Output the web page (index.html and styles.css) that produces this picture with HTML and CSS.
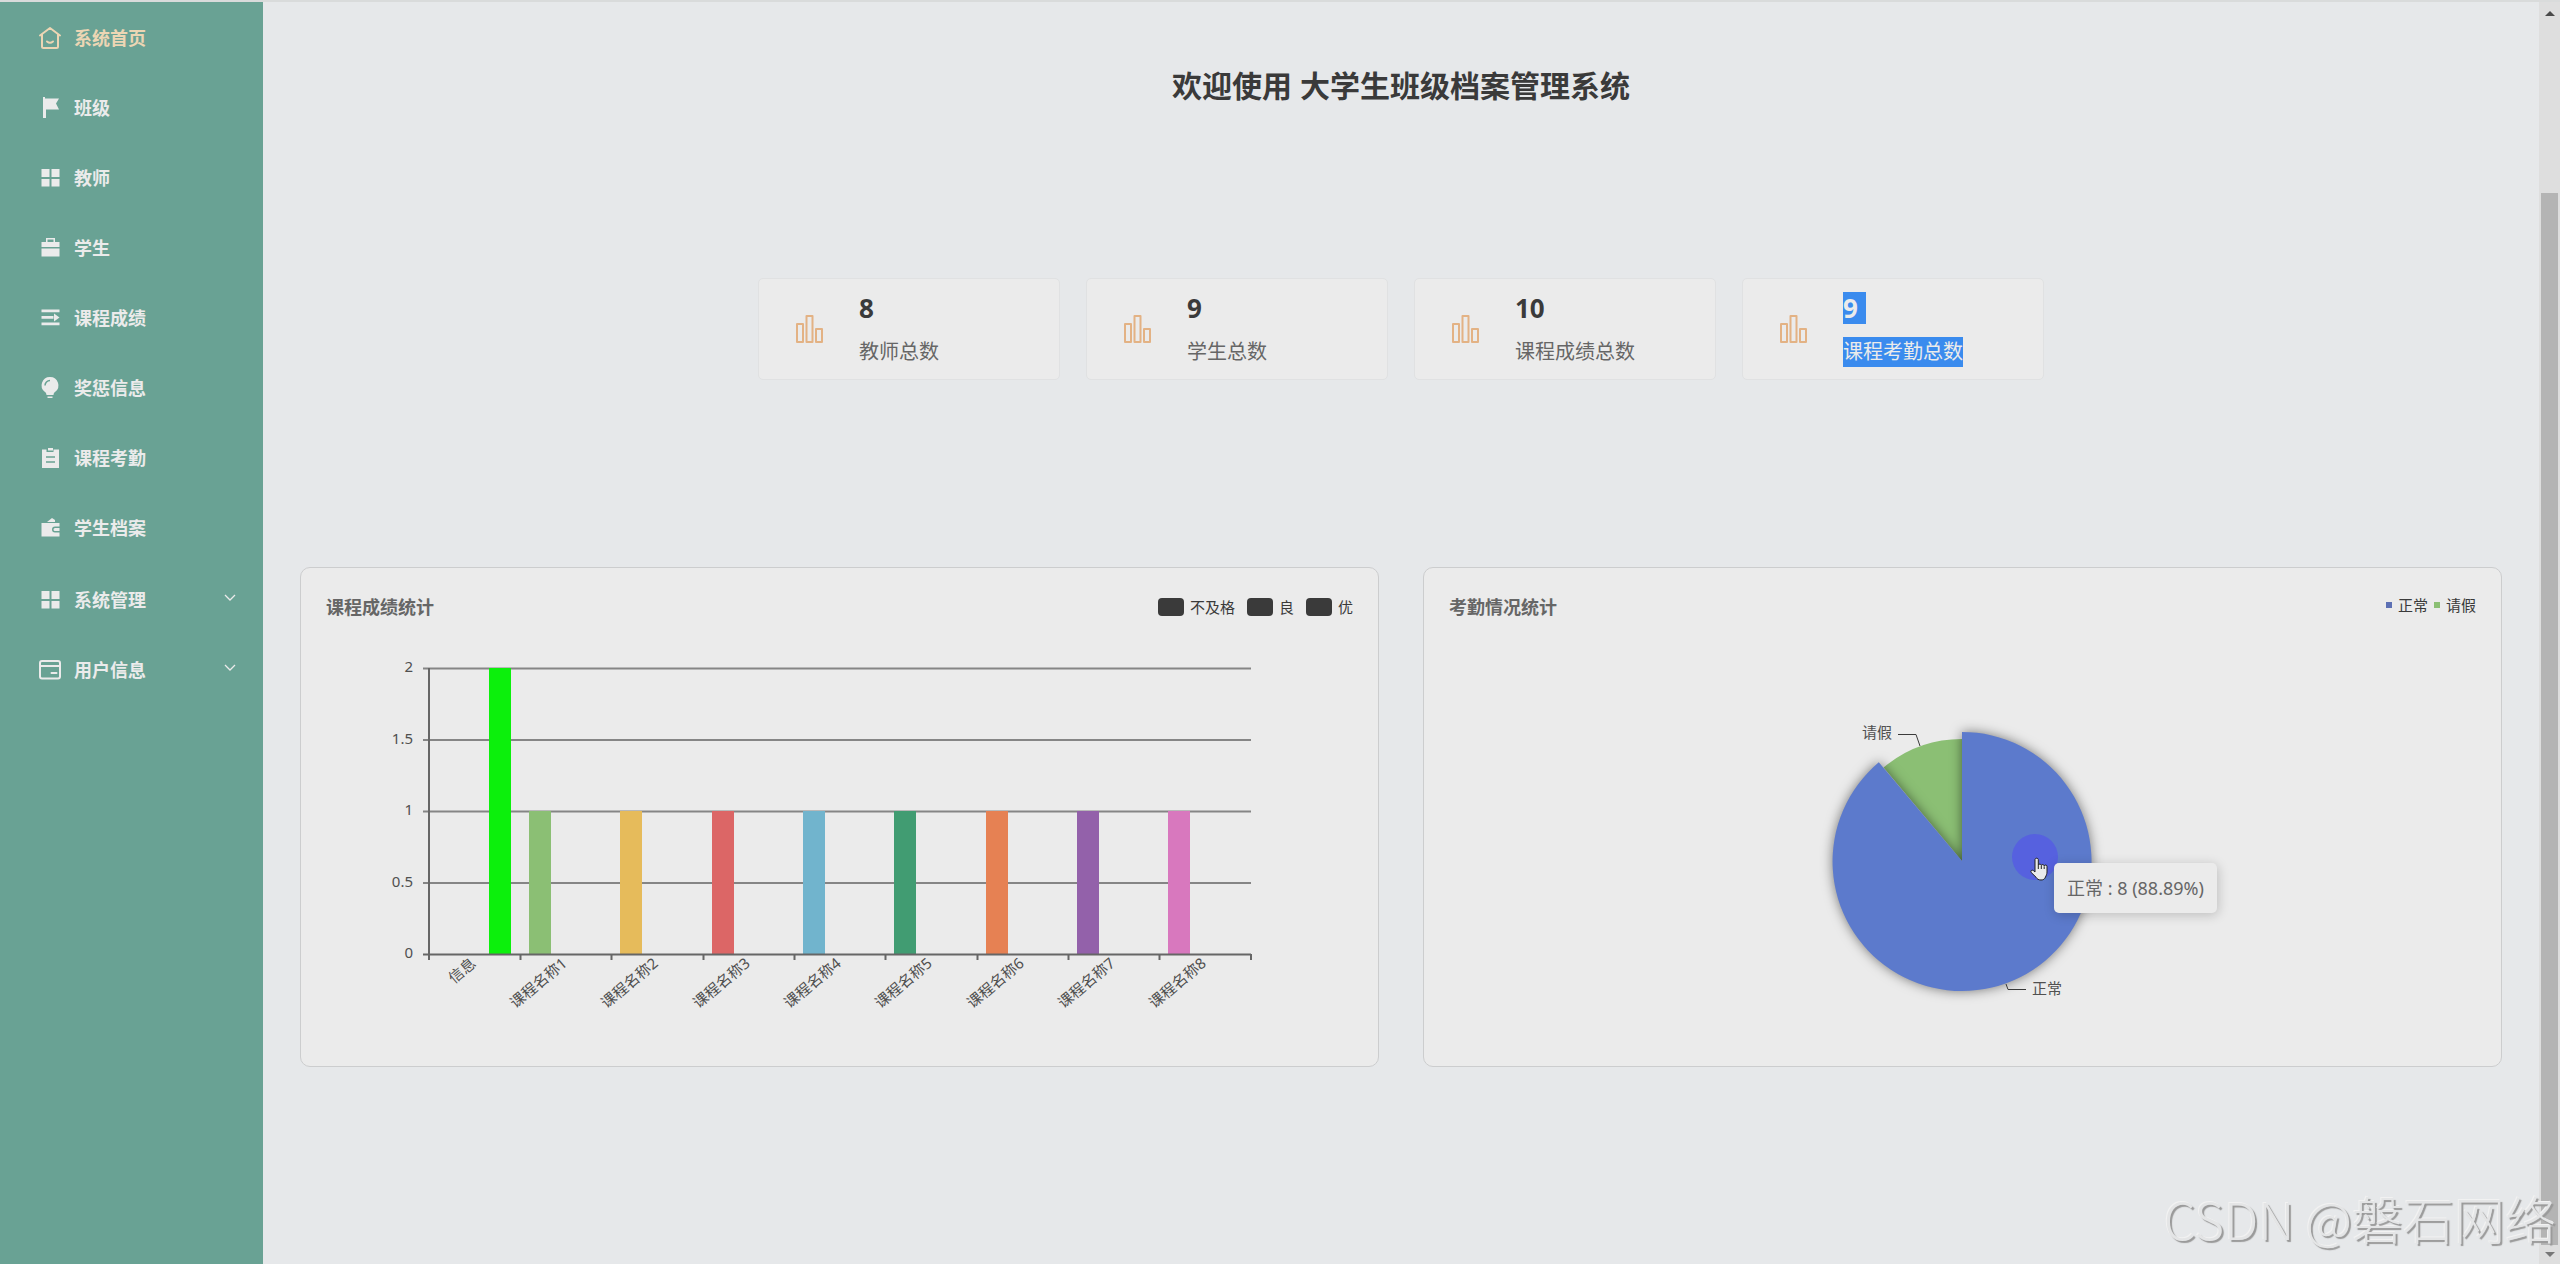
FILE: index.html
```html
<!DOCTYPE html>
<html lang="zh-CN">
<head>
  <meta charset="UTF-8" />
  <meta name="viewport" content="width=device-width, initial-scale=1.0" />
  <title>大学生班级档案管理系统</title>
  <link rel="stylesheet" href="styles.css">
</head>
<body>

  <nav class="sidebar">
    <ul class="menu">
      <li><a class="menu-item active" href="#">
        <svg class="icon" viewBox="0 0 24 24"><path class="line" d="M2 9.5L12 2l10 7.5M4 8.500V20.500a1.500 1.500 0 0 0 1.500 1.500h13a1.500 1.500 0 0 0 1.500-1.500V8.500M9 15.500q3 2.500 6 0"/></svg>
        <span>系统首页</span></a></li>
      <li><a class="menu-item" href="#">
        <svg class="icon" viewBox="0 0 24 24"><path d="M5 1h2v1.500h14l-3 5 3 6H8V22H5z"/></svg>
        <span>班级</span></a></li>
      <li><a class="menu-item" href="#">
        <svg class="icon" viewBox="0 0 24 24"><path d="M3.500 3h8v8h-8zM13.500 3h8v8h-8zM3.500 13h8v7.500h-8zM13.500 13h8v7.500h-8z"/></svg>
        <span>教师</span></a></li>
      <li><a class="menu-item" href="#">
        <svg class="icon" viewBox="0 0 24 24"><path d="M8 2h9v4h4.500v5h-18V6H8zM9.500 3.500V6h6V3.500zM3.500 12.500h18V20.500h-18z" fill-rule="evenodd"/></svg>
        <span>学生</span></a></li>
      <li><a class="menu-item" href="#">
        <svg class="icon" viewBox="0 0 24 24"><path d="M3.500 3.500h18v2.800h-18zM3.500 10h12v2.800h-12zM3.500 16.500h18v2.800h-18zM16 7.500l5.500 4-5.500 4z"/></svg>
        <span>课程成绩</span></a></li>
      <li><a class="menu-item" href="#">
        <svg class="icon" viewBox="0 0 24 24"><path d="M12 1a8.300 8.300 0 0 1 5 15c-1 .8-1.300 1.500-1.500 3h-7c-.2-1.500-.5-2.200-1.500-3A8.300 8.300 0 0 1 12 1zM9.500 20.500h5V22h-5z"/><path class="cut" d="M7 9.500a5 5 0 0 1 5-5"/></svg>
        <span>奖惩信息</span></a></li>
      <li><a class="menu-item" href="#">
        <svg class="icon" viewBox="0 0 24 24"><path d="M4 3.500h4.500V6h7V3.500H21V22H4zM10 2h5v2.500h-5z"/><path class="cut" d="M8 11h9M8 16h9"/></svg>
        <span>课程考勤</span></a></li>
      <li><a class="menu-item" href="#">
        <svg class="icon" viewBox="0 0 24 24"><path d="M9 6l5-4 3 2v2zM3.500 7h18v3.500H17a2.800 2.800 0 0 0 0 6h4.500V20.500h-18zM17 12h4.500v3H17a1.500 1.500 0 0 1 0-3z"/></svg>
        <span>学生档案</span></a></li>
    </ul>
    <ul class="menu menu-groups">
      <li><a class="menu-item" href="#">
        <svg class="icon" viewBox="0 0 24 24"><path d="M3.500 3h8v8h-8zM13.500 3h8v8h-8zM3.500 13h8v7.500h-8zM13.500 13h8v7.500h-8z"/></svg>
        <span>系统管理</span>
        <svg class="arrow" viewBox="0 0 12 12"><path d="M1 1l5 5 5-5"/></svg></a></li>
      <li><a class="menu-item" href="#">
        <svg class="icon" viewBox="0 0 24 24"><path class="line" d="M4 3h16a2 2 0 0 1 2 2v13.500a2 2 0 0 1-2 2H4a2 2 0 0 1-2-2V5a2 2 0 0 1 2-2zM2 8h20M13.500 15h5"/></svg>
        <span>用户信息</span>
        <svg class="arrow" viewBox="0 0 12 12"><path d="M1 1l5 5 5-5"/></svg></a></li>
    </ul>
  </nav>

  <main class="content">
    <h1>欢迎使用 大学生班级档案管理系统</h1>

    <div class="stats">
      <div class="stat">
        <svg class="stat-icon" viewBox="0 0 28 28"><path d="M1 9h6v18H1zM10.500 1h6v26h-6zM20 14h6v13h-6z"/></svg>
        <div class="stat-text"><p class="num">8</p><p class="label">教师总数</p></div>
      </div>
      <div class="stat">
        <svg class="stat-icon" viewBox="0 0 28 28"><path d="M1 9h6v18H1zM10.500 1h6v26h-6zM20 14h6v13h-6z"/></svg>
        <div class="stat-text"><p class="num">9</p><p class="label">学生总数</p></div>
      </div>
      <div class="stat">
        <svg class="stat-icon" viewBox="0 0 28 28"><path d="M1 9h6v18H1zM10.500 1h6v26h-6zM20 14h6v13h-6z"/></svg>
        <div class="stat-text"><p class="num">10</p><p class="label">课程成绩总数</p></div>
      </div>
      <div class="stat selected">
        <svg class="stat-icon" viewBox="0 0 28 28"><path d="M1 9h6v18H1zM10.500 1h6v26h-6zM20 14h6v13h-6z"/></svg>
        <div class="stat-text"><p class="num">9</p><p class="label">课程考勤总数</p></div>
      </div>
    </div>

    <div class="panels">
      <section class="panel">
        <header class="panel-head">
          <h2>课程成绩统计</h2>
          <ul class="legend">
            <li><i class="swatch"></i>不及格</li>
            <li><i class="swatch"></i>良</li>
            <li><i class="swatch"></i>优</li>
          </ul>
        </header>
        <div class="chart">
          <svg viewBox="0 0 1077 420">
            <path class="grid" d="M122 22.500H950M122 94H950M122 165.500H950M122 237H950"/>
            <!-- 柱子 -->
            <g>
              <rect x="188" y="22" width="22" height="286" fill="#0cf00c"/>
              <rect x="228" y="165" width="22" height="143" fill="#8bbf74"/>
              <rect x="319" y="165" width="22" height="143" fill="#e6bb5b"/>
              <rect x="411" y="165" width="22" height="143" fill="#dc6666"/>
              <rect x="502" y="165" width="22" height="143" fill="#71b4cd"/>
              <rect x="593" y="165" width="22" height="143" fill="#419c72"/>
              <rect x="685" y="165" width="22" height="143" fill="#e68153"/>
              <rect x="776" y="165" width="22" height="143" fill="#9361aa"/>
              <rect x="867" y="165" width="22" height="143" fill="#d878be"/>
            </g>
            <path class="axis" d="M128 22V314M122 308.500H950M219.500 308v6M310.500 308v6M402.500 308v6M493.500 308v6M584.500 308v6M676.500 308v6M767.500 308v6M858.500 308v6M950 308v6"/>
            <g class="y-labels">
              <text x="112" y="26">2</text>
              <text x="112" y="98">1.5</text>
              <text x="112" y="169">1</text>
              <text x="112" y="241">0.5</text>
              <text x="112" y="312">0</text>
            </g>
            <g class="x-labels">
              <text transform="translate(176 319) rotate(-40)">信息</text>
              <text transform="translate(267 319) rotate(-40)">课程名称1</text>
              <text transform="translate(358 319) rotate(-40)">课程名称2</text>
              <text transform="translate(450 319) rotate(-40)">课程名称3</text>
              <text transform="translate(541 319) rotate(-40)">课程名称4</text>
              <text transform="translate(632 319) rotate(-40)">课程名称5</text>
              <text transform="translate(724 319) rotate(-40)">课程名称6</text>
              <text transform="translate(815 319) rotate(-40)">课程名称7</text>
              <text transform="translate(906 319) rotate(-40)">课程名称8</text>
            </g>
          </svg>
        </div>
      </section>

      <section class="panel">
        <header class="panel-head">
          <h2>考勤情况统计</h2>
          <ul class="legend legend-small">
            <li><i class="dot dot-blue"></i>正常</li>
            <li><i class="dot dot-green"></i>请假</li>
          </ul>
        </header>
        <div class="chart">
          <svg viewBox="0 0 1077 420">
            <path d="M538 215L459.600 121.500A122 122 0 0 1 538 93z" fill="#8bbf74"/>
            <path class="slice-hover" d="M538 215V86A129.500 129.500 0 1 1 454.800 116.300z"/>
            <path class="leader" d="M474 88.500H492L496 100M582 338L584 343.500H602"/>
            <text class="pie-label" x="438" y="92">请假</text>
            <text class="pie-label" x="608" y="348">正常</text>
            <circle cx="611" cy="211" r="23" fill="#5661df"/>
          </svg>
          <div class="tooltip">正常 : 8 (88.89%)</div>
          <svg class="pointer" viewBox="0 0 18 24"><path d="M5 2.500a1.700 1.700 0 0 1 3.300 0V8a1.600 1.600 0 0 1 3 .3 1.600 1.600 0 0 1 2.900.5 1.500 1.500 0 0 1 2.800 1V15c0 2-.8 3.500-1.500 5-.8 2-2 3-4.500 3s-4-1-5-2.800L1.200 15.500c-1-1.700.7-3 2.100-2L5 15zM8.300 8v4M11.300 8.500V12M14.200 9.300V12"/></svg>
        </div>
      </section>
    </div>
  </main>

  <div class="scrollbar">
    <span class="up"></span>
    <span class="thumb"></span>
    <span class="down"></span>
  </div>

  <div class="watermark">CSDN @磐石网络</div>

</body>
</html>
```
FILE: styles.css
```css
* {
  box-sizing: border-box;
}
body {
  font-family: "Noto Sans", "Noto Sans CJK SC", sans-serif;
  background: #e6e8ea;
  color: #3a3a3a;
  margin: 0;
  border-top: 2px solid #d9dbdb;
  min-height: 100vh;
  display: flex;
  position: relative;
}
h1, h2, p, ul {
  margin: 0;
  padding: 0;
}
ul {
  list-style: none;
}

/* 左侧菜单 */
.sidebar {
  flex: none;
  width: 263px;
  padding-top: 1px;
  background: #69a294;
}
.menu-item {
  display: flex;
  align-items: center;
  gap: 12px;
  height: 70px;
  padding: 0 27px 0 38px;
  color: #ebebeb;
  font-size: 18px;
  font-weight: bold;
  line-height: 24px;
  text-decoration: none;
}
.menu-item.active {
  color: #ecd6b4;
}
.menu-groups {
  margin-top: 2px;
}
.icon {
  width: 24px;
  height: 24px;
  fill: currentColor;
}
.icon .line {
  fill: none;
  stroke: currentColor;
  stroke-width: 2;
  stroke-linejoin: round;
  stroke-linecap: round;
}
.icon .cut {
  fill: none;
  stroke: #69a294;
  stroke-width: 1.5;
}
.arrow {
  width: 12px;
  height: 12px;
  margin-left: auto;
  fill: none;
  stroke: #ebebeb;
  stroke-width: 1.3;
}

/* 内容 */
.content {
  flex: 1;
  min-width: 0;
  padding: 60px 37px;
}
h1 {
  font-size: 30px;
  line-height: 48px;
  text-align: center;
}
.stats {
  display: flex;
  justify-content: center;
  gap: 26px;
  margin-top: 168px;
}
.stat {
  display: flex;
  align-items: center;
  gap: 35px;
  width: 302px;
  height: 102px;
  padding: 0 37px;
  background: #ebebeb;
  border: 1px solid #e0e1e2;
  border-radius: 5px;
}
.stat-icon {
  width: 28px;
  height: 28px;
  fill: none;
  stroke: #e3b284;
  stroke-width: 2;
  stroke-linejoin: round;
}
.stat-text {
  display: flex;
  flex-direction: column;
  align-items: flex-start;
  gap: 13px;
}
.num {
  font-size: 26px;
  font-weight: bold;
  line-height: 32px;
}
.label {
  font-size: 20px;
  line-height: 30px;
  color: #666;
}
.selected .num, .selected .label {
  background: #3a8bee;
  color: #ebebeb;
}
.selected .num {
  padding-right: 8px;
}

.panels {
  display: flex;
  gap: 44px;
  margin-top: 187px;
}
.panel {
  flex: 1;
  background: #ebebeb;
  border: 1px solid #cccdce;
  border-radius: 10px;
}
.panel-head {
  display: flex;
  align-items: center;
  justify-content: space-between;
  height: 78px;
  padding: 0 25px;
}
h2 {
  font-size: 18px;
  line-height: 24px;
  color: #666;
}
.legend {
  display: flex;
  gap: 12px;
  font-size: 15px;
  line-height: 20px;
}
.legend li {
  display: flex;
  align-items: center;
  gap: 6px;
}
.legend-small {
  gap: 6px;
  padding-bottom: 5px;
}
.swatch {
  width: 26px;
  height: 18px;
  border-radius: 4px;
  background: #3a3a3a;
}
.dot {
  width: 6px;
  height: 6px;
}
.dot-blue {
  background: #5c70b4;
}
.dot-green {
  background: #8bbf74;
}

/* 图表 */
.chart {
  position: relative;
}
.chart svg {
  display: block;
  width: 100%;
}
.grid, .axis {
  fill: none;
  stroke: #858585;
  stroke-width: 2;
}
.axis {
  stroke: #666;
}
.chart text {
  font-size: 15px;
  fill: #505050;
}
.y-labels text, .x-labels text {
  text-anchor: end;
}
.slice-hover {
  fill: #5c7acc;
  filter: drop-shadow(0 0 6px rgba(0, 0, 0, 0.5));
}
.leader {
  fill: none;
  stroke: #3a3a3a;
}
.tooltip {
  position: absolute;
  left: 630px;
  top: 217px;
  padding: 13px;
  border-radius: 5px;
  background: #ebebeb;
  box-shadow: 1px 2px 12px rgba(0, 0, 0, 0.2);
  color: #666;
  font-size: 18px;
  line-height: 24px;
  white-space: nowrap;
}
.chart .pointer {
  position: absolute;
  left: 606px;
  top: 211px;
  width: 18px;
  fill: #ebebeb;
  stroke: #222;
}

/* 滚动条 */
.scrollbar {
  flex: none;
  display: flex;
  flex-direction: column;
  align-items: center;
  width: 21px;
  padding: 9px 0 7px;
  background: #dedede;
}
.up, .down {
  border: 5px solid transparent;
}
.up {
  border-top: 0;
  border-bottom-color: #4a4a4a;
}
.down {
  border-bottom: 0;
  border-top-color: #777;
}
.thumb {
  flex: 1;
  width: 17px;
  margin: 177px 0 7px;
  background: #b4b4b4;
}

.watermark {
  position: absolute;
  right: 4px;
  bottom: 10px;
  font-family: "Noto Sans CJK SC", sans-serif;
  font-size: 51px;
  font-weight: 300;
  line-height: 72px;
  color: #e4e5e6;
  text-shadow: 2px 2px 1px #999, -1px -1px 0 #f2f2f2;
}
```
